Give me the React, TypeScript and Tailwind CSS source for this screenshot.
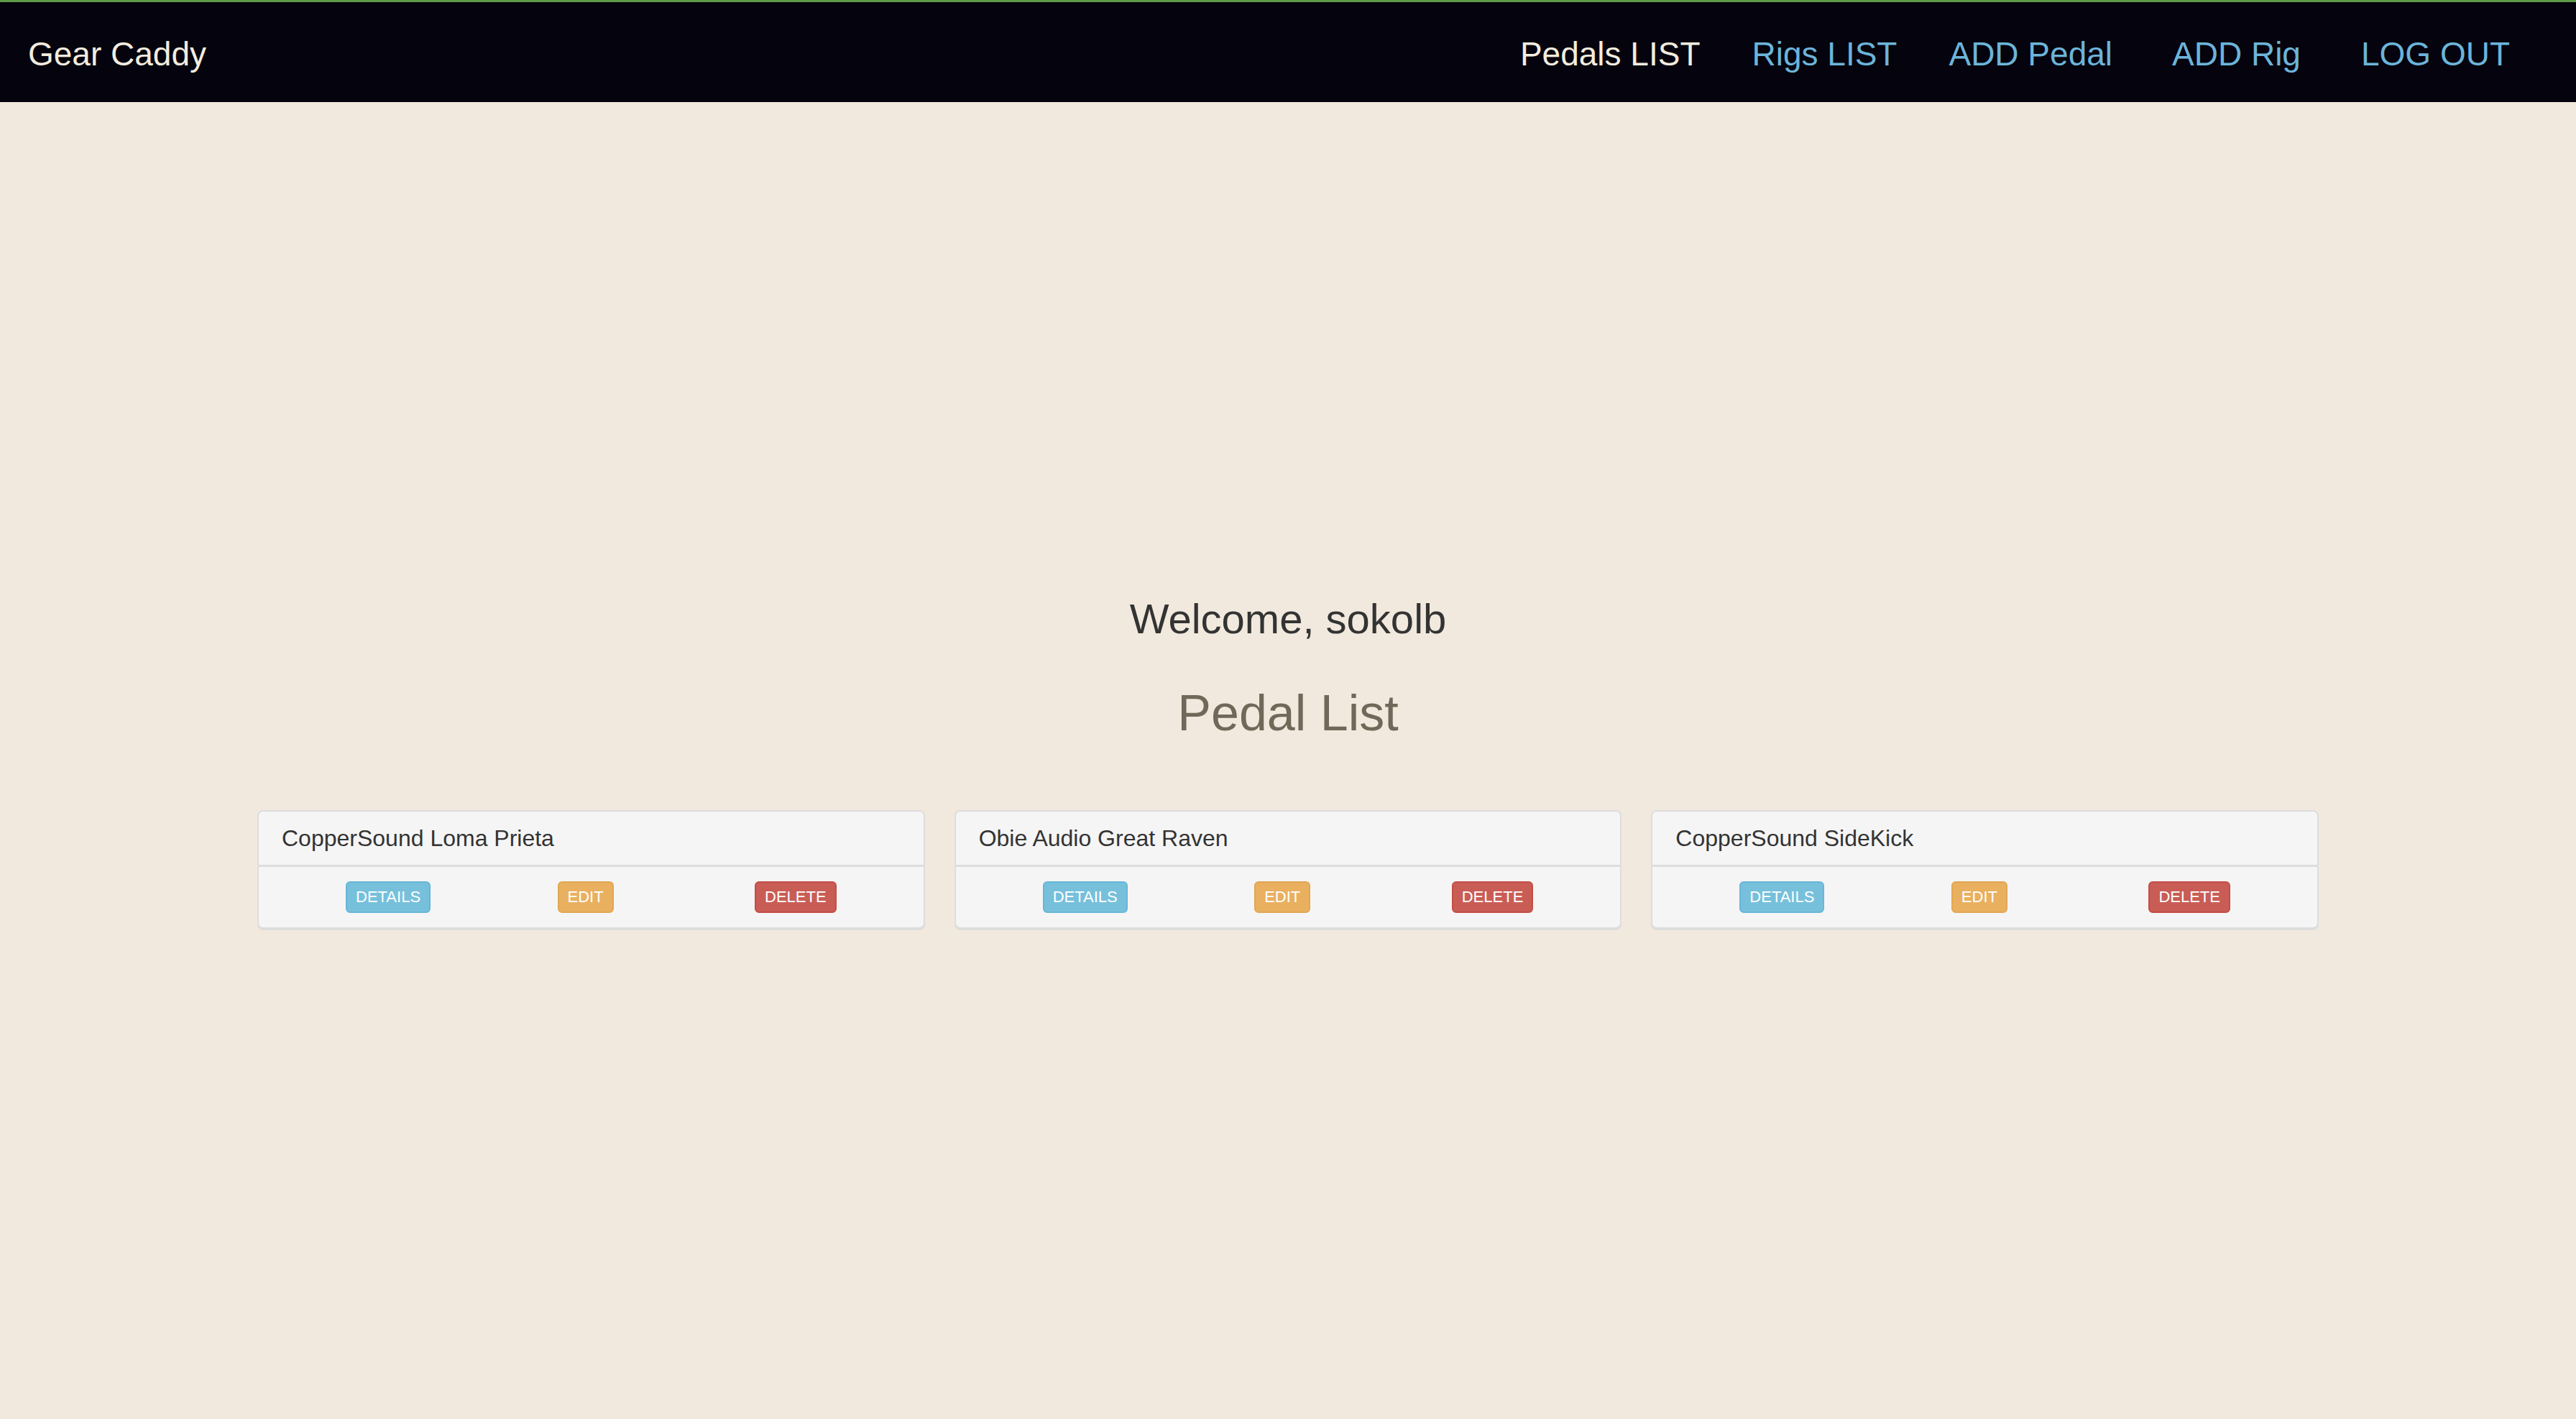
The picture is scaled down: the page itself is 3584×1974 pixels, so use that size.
import React from "react";

const pedals = [
  "CopperSound Loma Prieta",
  "Obie Audio Great Raven",
  "CopperSound SideKick",
];

function Navbar() {
  return (
    <header className="border-t-[3px] border-[#5e9a48] bg-[#05030d] h-[142px] flex items-center justify-between pl-[39px] pr-[92px] pt-[4px] text-[46px] leading-none">
      {/* Brand */}
      <a href="#" className="text-[#f3ecdf]">
        Gear Caddy
      </a>

      {/* Links */}
      <nav className="flex items-center">
        <a href="#" className="text-[#f3ecdf]">Pedals LIST</a>
        <a href="#" className="ml-[72px] text-[#6cb4da]">Rigs LIST</a>
        <a href="#" className="ml-[72px] text-[#6cb4da]">ADD Pedal</a>
        <a href="#" className="ml-[83px] text-[#6cb4da]">ADD Rig</a>
        <a href="#" className="ml-[84px] text-[#6cb4da]">LOG OUT</a>
      </nav>
    </header>
  );
}

function PedalCard({ name }: { name: string }) {
  return (
    <div className="bg-[#f5f5f5] border-2 border-[#dddddd] rounded-[8px] shadow-[0_2px_0_#dcdcdc]">
      <div className="px-[32px] py-[15px] text-[32px] leading-[44px] text-[#333333] border-b-[3px] border-[#dddddd]">
        {name}
      </div>
      <div className="flex justify-between px-[121px] py-[20px]">
        <button className="h-[44px] px-[12px] rounded-[6px] border-2 border-[#68b6d6] bg-[#76c0dc] text-white text-[22px] leading-none">
          DETAILS
        </button>
        <button className="h-[44px] px-[12px] mr-[20px] rounded-[6px] border-2 border-[#e2a752] bg-[#e9b060] text-white text-[22px] leading-none">
          EDIT
        </button>
        <button className="h-[44px] px-[12px] rounded-[6px] border-2 border-[#c44e46] bg-[#c95d55] text-white text-[22px] leading-none">
          DELETE
        </button>
      </div>
    </div>
  );
}

export default function App() {
  return (
    <div className="min-h-screen flex flex-col bg-[#f1e9dd] font-['Liberation_Sans',Arial,sans-serif]">
      <Navbar />

      <main className="flex-1 flex flex-col items-center justify-center pt-[4px]">
        <h3 className="text-[58px] leading-[64px] font-medium text-[#333333]">
          Welcome, sokolb
        </h3>
        <h2 className="mt-[61px] text-[70px] leading-[77px] text-[#706858]">
          Pedal List
        </h2>

        <div className="mt-[96px] w-[2868px] grid grid-cols-3 gap-[41px]">
          {pedals.map((p) => (
            <PedalCard key={p} name={p} />
          ))}
        </div>
      </main>
    </div>
  );
}
